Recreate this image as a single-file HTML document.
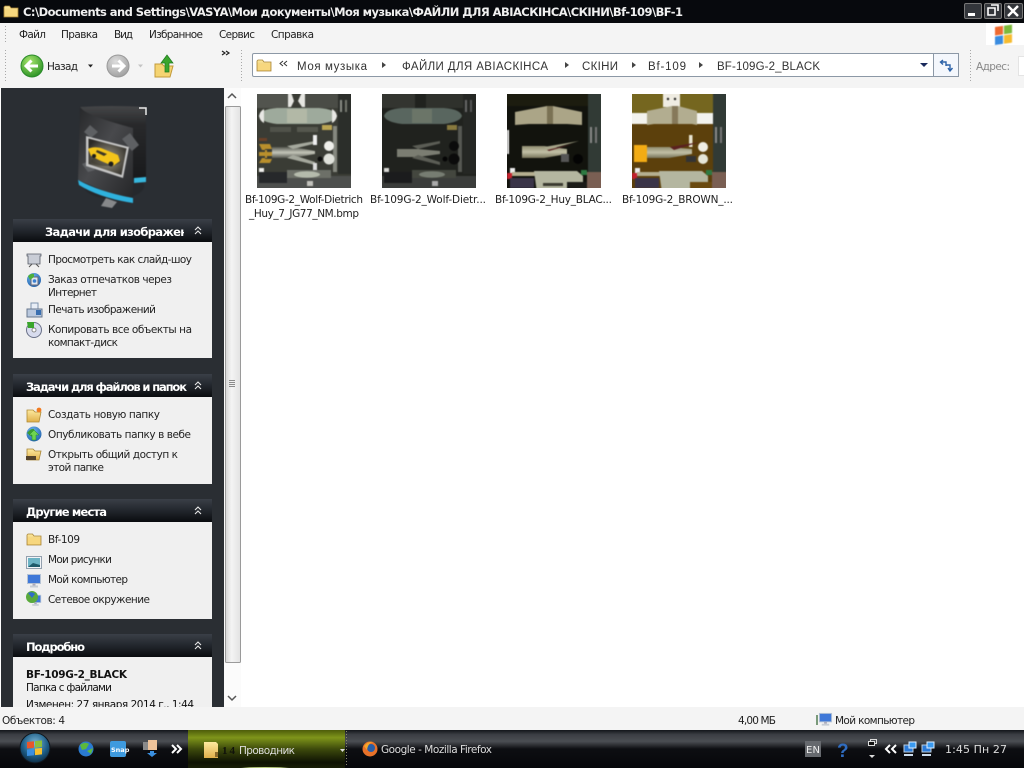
<!DOCTYPE html>
<html lang="ru"><head><meta charset="utf-8"><title>BF-1</title>
<style>
html,body{margin:0;padding:0;background:#fff;width:1024px;height:768px;overflow:hidden}
svg{display:block;position:absolute;left:0;top:0}
text{font-family:"DejaVu Sans","Liberation Sans",sans-serif;font-size:10.5px;fill:#222;white-space:pre}
.b{font-weight:bold}
.h{font-weight:bold;fill:#fff;font-size:11.5px}
.l{font-family:"Liberation Sans",sans-serif;font-size:11.5px}
.w{fill:#ddd}
</style></head><body>
<svg width="1024" height="768" viewBox="0 0 1024 768" xmlns="http://www.w3.org/2000/svg">
<defs>
<linearGradient id="hd" x1="0" y1="0" x2="0" y2="1"><stop offset="0" stop-color="#3a3f47"/><stop offset=".55" stop-color="#20242a"/><stop offset="1" stop-color="#090b0e"/></linearGradient>
<linearGradient id="tb" x1="0" y1="0" x2="0" y2="1"><stop offset="0" stop-color="#12151a"/><stop offset=".12" stop-color="#3b3e44"/><stop offset=".3" stop-color="#4b4e53"/><stop offset=".5" stop-color="#0d0e12"/><stop offset="1" stop-color="#06070a"/></linearGradient>
<linearGradient id="act" x1="0" y1="0" x2="0" y2="1"><stop offset="0" stop-color="#4d5c0a"/><stop offset=".2" stop-color="#7f951a"/><stop offset=".5" stop-color="#3d4a0c"/><stop offset=".85" stop-color="#0e1203"/><stop offset="1" stop-color="#181e06"/></linearGradient>
<linearGradient id="sb" x1="0" y1="0" x2="1" y2="0"><stop offset="0" stop-color="#d4d4d4"/><stop offset=".4" stop-color="#f4f4f4"/><stop offset="1" stop-color="#e2e2e2"/></linearGradient>
<linearGradient id="fold" x1="0" y1="0" x2="0" y2="1"><stop offset="0" stop-color="#fdeaa0"/><stop offset="1" stop-color="#e0b04a"/></linearGradient>
<linearGradient id="dk" x1="0" y1="0" x2="1" y2="1"><stop offset="0" stop-color="#262729"/><stop offset=".45" stop-color="#48494c"/><stop offset="1" stop-color="#242527"/></linearGradient>
<linearGradient id="bk" x1="0" y1="0" x2="0" y2="1"><stop offset="0" stop-color="#454648"/><stop offset=".25" stop-color="#28292b"/><stop offset="1" stop-color="#18191b"/></linearGradient>
<radialGradient id="ph" cx=".5" cy=".55" r=".6"><stop offset="0" stop-color="#a09a88"/><stop offset="1" stop-color="#2c2a26"/></radialGradient>
<radialGradient id="grn" cx=".4" cy=".3" r=".8"><stop offset="0" stop-color="#a8e66c"/><stop offset="1" stop-color="#1f8a1f"/></radialGradient>
<radialGradient id="gry" cx=".4" cy=".3" r=".8"><stop offset="0" stop-color="#ddd"/><stop offset="1" stop-color="#9a9a9a"/></radialGradient>
<radialGradient id="orb" cx=".5" cy=".35" r=".7"><stop offset="0" stop-color="#7cb8d8"/><stop offset=".6" stop-color="#1d5d86"/><stop offset="1" stop-color="#0a2236"/></radialGradient>
<radialGradient id="glob" cx=".4" cy=".3" r=".8"><stop offset="0" stop-color="#6fb6f0"/><stop offset="1" stop-color="#1c5ca8"/></radialGradient>
<linearGradient id="bd" x1="0" y1="0" x2="0" y2="1"><stop offset="0" stop-color="#55574f"/><stop offset=".5" stop-color="#c4c6ba"/><stop offset="1" stop-color="#55574f"/></linearGradient>
<linearGradient id="bd3" x1="0" y1="0" x2="0" y2="1"><stop offset="0" stop-color="#8f8c70"/><stop offset=".5" stop-color="#c2c0a6"/><stop offset="1" stop-color="#77745a"/></linearGradient>
<filter id="bl" x="-.1" y="-.1" width="1.2" height="1.2" color-interpolation-filters="sRGB"><feGaussianBlur stdDeviation=".55"/></filter>
<filter id="bl2" x="-.1" y="-.1" width="1.2" height="1.2" color-interpolation-filters="sRGB"><feGaussianBlur stdDeviation=".5"/></filter>
<clipPath id="cth"><rect width="94" height="94"/></clipPath>
<clipPath id="c1"><rect x="13" y="219" width="171" height="24"/></clipPath>
<clipPath id="c4"><rect x="13" y="657" width="199" height="50"/></clipPath>
<symbol id="fd" viewBox="0 0 16 16"><path d="M1 4 L1 14 L15 14 L15 5 L8 5 L6.500 3 L2 3Z" fill="url(#fold)" stroke="#a88436" stroke-width=".8"/><path d="M1.500 7H14.500V13.500H1.500Z" fill="#f7d77e"/></symbol>
<symbol id="mon" viewBox="0 0 16 16"><rect x="1.500" y="1.500" width="13" height="9" fill="#3f78d8" stroke="#b5c3d5"/><rect x="6.500" y="10.500" width="3" height="2" fill="#aab"/><rect x="4" y="12.500" width="8" height="2" fill="#c6ccd4"/></symbol>
</defs>

<!-- window background -->
<rect width="1024" height="768" fill="#fff"/>
<rect y="0" width="1024" height="23" fill="#07090d"/>
<rect y="23" width="1024" height="65" fill="#f4f4f4"/>

<!-- title bar -->
<use href="#fd" x="3" y="3" width="16" height="16"/>
<text class="b" x="23" y="16" textLength="660" style="fill:#f0f0f0;font-size:11.500px">C:\Documents and Settings\VASYA\Мои документы\Моя музыка\ФАЙЛИ ДЛЯ АВІАСКІНСА\СКІНИ\Bf-109\BF-1</text>
<g stroke="#777" fill="#33363b"><rect x="964.500" y="3.500" width="17" height="15" rx="1.500"/><rect x="984.500" y="3.500" width="17" height="15" rx="1.500"/><rect x="1004.500" y="3.500" width="18" height="15" rx="1.500"/></g>
<rect x="968" y="13" width="7" height="3" fill="#fff"/>
<path d="M988 8h7v7h-7zM991 5h7v6" fill="none" stroke="#fff" stroke-width="1.600"/>
<path d="M1008 6l10 10M1018 6l-10 10" stroke="#fff" stroke-width="2.400"/>

<!-- menu -->
<path d="M5.500 26V42M5.500 50V82M241.500 50V82M970.500 50V82" stroke="#a8a8a8" stroke-dasharray="1 2"/>
<text x="19" y="38" textLength="27">Файл</text>
<text x="61" y="38" textLength="37">Правка</text>
<text x="114" y="38" textLength="19">Вид</text>
<text x="149" y="38" textLength="54">Избранное</text>
<text x="219" y="38" textLength="36">Сервис</text>
<text x="271" y="38" textLength="43">Справка</text>
<rect x="986" y="23" width="38" height="22" fill="#fff"/>
<g transform="translate(995,25) skewY(-8)" filter="url(#bl2)"><rect width="8" height="8.500" y="2" fill="#ee6a30"/><rect x="9" y="2" width="8" height="8.500" fill="#7cba3a"/><rect y="11.500" width="8" height="8.500" fill="#3a8ce0"/><rect x="9" y="11.500" width="8" height="8.500" fill="#f6bb2e"/></g>

<!-- toolbar -->
<circle cx="32" cy="66" r="11" fill="url(#grn)" stroke="#2a8a2a"/>
<path d="M38 66H27M31.500 60.500L26 66L31.500 71.500" fill="none" stroke="#fff" stroke-width="3"/>
<text x="47" y="70" textLength="31">Назад</text>
<path d="M88 64.500h5l-2.500 3z" fill="#222"/>
<circle cx="118" cy="66" r="11" fill="url(#gry)" stroke="#999"/>
<path d="M112 66H123M118.500 60.500L124 66L118.500 71.500" fill="none" stroke="#fff" stroke-width="3"/>
<path d="M138 64.500h5l-2.500 3z" fill="#c4c4c4"/>
<path d="M155 64h7l2 2h9l-3 11h-15z" fill="#f5d472" stroke="#c29a3a"/>
<path d="M165 72V63H161L167 55L173 63H169V72Z" fill="#3aa52c" stroke="#1e7a1e" stroke-width=".7"/>
<path d="M222 51l3 2-3 2M226 51l3 2-3 2" fill="none" stroke="#222" stroke-width="1.200"/>

<!-- address bar -->
<rect x="252.500" y="53.500" width="706" height="23" rx="1.500" fill="#fff" stroke="#8c98a6"/>
<rect x="933.500" y="53.500" width="25" height="23" fill="#f4f7fc" stroke="#8c98a6"/>
<use href="#fd" x="256" y="57" width="16" height="16"/>
<path d="M283 61l-3 2.500 3 2.500M287 61l-3 2.500 3 2.500" fill="none" stroke="#333"/>
<text class="l" x="297" y="70" textLength="70" style="fill:#333">Моя музыка</text>
<path d="M382 62l4 3-4 3z" fill="#444"/>
<text class="l" x="402" y="70" textLength="146" style="fill:#333">ФАЙЛИ ДЛЯ АВІАСКІНСА</text>
<path d="M565 62l4 3-4 3z" fill="#444"/>
<text class="l" x="582" y="70" textLength="36" style="fill:#333">СКІНИ</text>
<path d="M632 62l4 3-4 3z" fill="#444"/>
<text class="l" x="648" y="70" textLength="38" style="fill:#333">Bf-109</text>
<path d="M699 62l4 3-4 3z" fill="#444"/>
<text class="l" x="717" y="70" textLength="103" style="fill:#333">BF-109G-2_BLACK</text>
<path d="M920 63h8l-4 4z" fill="#1a2a5c"/>
<path d="M946 66V62H941M943 60L940.500 62L943 64.500" fill="none" stroke="#2c62a8" stroke-width="1.400"/>
<path d="M946 65H950V70M948 68L950 71L952.500 68" fill="none" stroke="#2c62a8" stroke-width="1.400"/>
<text x="976" y="70" textLength="34" style="fill:#888">Адрес:</text>
<rect x="1018.500" y="56.500" width="10" height="19" fill="#fff" stroke="#e4e4e4"/>

<!-- left sidebar -->
<rect x="1" y="88" width="223" height="619" fill="#2a2e33"/>

<!-- sidebar folder icon -->
<g filter="url(#bl2)">
<ellipse cx="114" cy="186" rx="30" ry="13" fill="#25282c"/>
<path d="M80 107 Q110 105 146 107 V178 L134 180 L120 150Z" fill="url(#bk)"/>
<path d="M134 178L146 177V182L134 183Z" fill="#37b7dd"/>
<path d="M80 107 Q84 115 133 128 V203 L78 180Z" fill="url(#dk)"/>
<path d="M78 180 Q100 192 133 198 V203 Q100 198 79 185Z" fill="#2fb2de"/>
<path d="M106 198l11 4-5 6-11-2z" fill="#86888a"/>
<path d="M84 132l6-7 8 7-7 6zM122 139l8-6 9 12-7 6zM82 164l6 8 7-2-8-8z" fill="#5e6063"/>
<path d="M86 136L129 147L123 178L86 166Z" fill="#c4c4c4"/>
<path d="M88.500 138.500L126.500 148.500L121.500 175L88.500 164Z" fill="url(#ph)"/>
<ellipse cx="106" cy="161" rx="15" ry="5" fill="#3a362c" opacity=".55"/>
<path d="M88 149Q93 146 101 148L118 155L120 161L113 166L101 161L91 156Z" fill="#f4c41a"/>
<path d="M97 150l10 4-3 2-8-4z" fill="#3a3526"/>
<circle cx="111" cy="164" r="2.500" fill="#1c1c1c"/><circle cx="94" cy="156" r="2" fill="#1c1c1c"/>
</g>
<path d="M139 108h7v7" fill="none" stroke="#e8e8e8" stroke-width="1.500"/>

<!-- panels -->
<g>
<rect x="13" y="242" width="199" height="116" fill="#f0f0f0"/><rect x="13" y="219" width="199" height="23" fill="url(#hd)"/>
<rect x="13" y="397" width="199" height="87" fill="#f0f0f0"/><rect x="13" y="374" width="199" height="23" fill="url(#hd)"/>
<rect x="13" y="522" width="199" height="97" fill="#f0f0f0"/><rect x="13" y="499" width="199" height="23" fill="url(#hd)"/>
<rect x="13" y="657" width="199" height="50" fill="#f0f0f0"/><rect x="13" y="634" width="199" height="23" fill="url(#hd)"/>
</g>
<g fill="none" stroke="#e8e8e8" stroke-width="1.100">
<path d="M195 230l3-3 3 3M195 234l3-3 3 3"/>
<path d="M195 385l3-3 3 3M195 389l3-3 3 3"/>
<path d="M195 510l3-3 3 3M195 514l3-3 3 3"/>
<path d="M195 645l3-3 3 3M195 649l3-3 3 3"/>
</g>
<text class="h" x="45" y="236" textLength="158" clip-path="url(#c1)">Задачи для изображений</text>
<text class="h" x="26" y="391" textLength="161">Задачи для файлов и папок</text>
<text class="h" x="26" y="516" textLength="81">Другие места</text>
<text class="h" x="26" y="651" textLength="59">Подробно</text>

<text x="48" y="263" textLength="144">Просмотреть как слайд-шоу</text>
<text x="48" y="283" textLength="124">Заказ отпечатков через</text>
<text x="48" y="296" textLength="49">Интернет</text>
<text x="48" y="313" textLength="108">Печать изображений</text>
<text x="48" y="333" textLength="144">Копировать все объекты на</text>
<text x="48" y="346" textLength="70">компакт-диск</text>

<text x="48" y="418" textLength="112">Создать новую папку</text>
<text x="48" y="438" textLength="143">Опубликовать папку в вебе</text>
<text x="48" y="458" textLength="130">Открыть общий доступ к</text>
<text x="48" y="471" textLength="56">этой папке</text>

<text x="48" y="543" textLength="32">Bf-109</text>
<text x="48" y="563" textLength="64">Мои рисунки</text>
<text x="48" y="583" textLength="80">Мой компьютер</text>
<text x="48" y="603" textLength="102">Сетевое окружение</text>

<g clip-path="url(#c4)">
<text class="b" x="26" y="678" textLength="101" style="fill:#111">BF-109G-2_BLACK</text>
<text x="26" y="691" textLength="86" style="fill:#111">Папка с файлами</text>
<text x="26" y="708" textLength="168" style="fill:#111">Изменен: 27 января 2014 г., 1:44</text>
</g>

<!-- sidebar icons panel 1 -->
<path d="M27 254h14v2h-1v8h-12v-8h-1z" fill="#c9cdd6" stroke="#555b66" stroke-width=".8"/><path d="M32 264l-3 3M36 264l3 3" stroke="#555"/>
<circle cx="34" cy="280" r="7" fill="url(#glob)"/><rect x="31" y="277" width="7" height="8" fill="#dfe6f0" stroke="#667"/><circle cx="34.500" cy="281" r="1.800" fill="#3a7fd0"/><path d="M28 276q3-3 6-2v3l-4 3z" fill="#4caf3c"/>
<rect x="31" y="303" width="7" height="9" fill="#e8eef6" stroke="#7e93ad"/><rect x="27" y="309" width="15" height="8" fill="#b9c8de" stroke="#68778e"/><rect x="36" y="310" width="5" height="5" fill="#3a6fb0"/>
<circle cx="34" cy="330" r="7.500" fill="#d8dcee" stroke="#6a7188"/><circle cx="34" cy="330" r="2" fill="#fff" stroke="#888"/><path d="M27 322h7v6h-6z" fill="#3aa52c"/>
<!-- panel 2 -->
<path d="M27 410h6l2 2h6l-2 10H27z" fill="url(#fold)" stroke="#b08a34" stroke-width=".8"/><circle cx="39" cy="410" r="2.400" fill="#f17a1f"/>
<circle cx="34" cy="434" r="7.500" fill="url(#glob)"/><path d="M27 433q4-5 7-4l1 5-3 3z" fill="#3c9c35"/><path d="M34 430l5 5h-3v5h-4v-5h-3z" fill="#6ed451" stroke="#238a23" stroke-width=".5"/>
<path d="M27 449h6l2 2h6l-2 9H27z" fill="url(#fold)" stroke="#a88436" stroke-width=".8"/><rect x="26" y="456" width="10" height="4" fill="#54432c"/>
<!-- panel 3 -->
<use href="#fd" x="26" y="531" width="16" height="16"/>
<rect x="26.500" y="556.500" width="15" height="12" fill="#f2f4f7" stroke="#93a0ae"/><rect x="28" y="558" width="12" height="9" fill="#6cb3c4"/><path d="M28 567l5-4 7 2v2z" fill="#1e5a6a"/>
<use href="#mon" x="26" y="573" width="16" height="16"/>
<use href="#mon" x="29" y="594" width="13" height="13"/><circle cx="32" cy="597" r="6" fill="#5aaa3c"/><path d="M28 593q4-2 7 1l-3 4z" fill="#2e6cc8"/>

<!-- scrollbar -->
<rect x="224" y="88" width="17" height="619" fill="#fbfbfb"/>
<path d="M228 98l4-4 4 4" fill="none" stroke="#555" stroke-width="1.500"/>
<path d="M228 696l4 4 4-4" fill="none" stroke="#555" stroke-width="1.500"/>
<rect x="225.500" y="106.500" width="15" height="556" rx="1" fill="url(#sb)" stroke="#9a9a9a"/>
<path d="M229 380.500h6M229 382.500h6M229 384.500h6M229 386.500h6" stroke="#8a8a8a"/>

<!-- thumbnails -->
<g transform="translate(257,94)" clip-path="url(#cth)">
<g filter="url(#bl)">
<rect x="-5" y="-5" width="104" height="104" fill="#3a3c35"/>
<rect x="-5" y="-5" width="38" height="19" fill="#52544e"/><rect x="44" y="-5" width="38" height="19" fill="#4a4c46"/>
<path d="M31 -2h3l3 9-3 6h-3zM48 -2h-3l-4 9 4 6h3z" fill="#e6e6e2"/>
<path d="M2 22Q4 15 20 14H62Q78 15 80 22Q78 28 62 30H20Q4 28 2 22Z" fill="#9eaa9c"/>
<path d="M2 22q1-5 5-7v14q-4-2-5-7zM80 22q-1-5-5-7v14q4-2 5-7z" fill="#e8e8e4"/>
<rect x="30" y="15" width="20" height="14" fill="#b2b8a6"/>
<rect x="81" y="-5" width="18" height="85" fill="#2b2e2a"/>
<rect x="83" y="6" width="2" height="12" fill="#8a8d86"/><rect x="88" y="6" width="2" height="12" fill="#74776f"/>
<rect x="76" y="32" width="4" height="46" fill="#85887f"/>
<rect x="65" y="31" width="10" height="5" fill="#bba552"/>
<rect x="13" y="33" width="21" height="5" fill="#50524a"/><rect x="40" y="33" width="21" height="5" fill="#55574e"/>
<rect x="2" y="44" width="8" height="3" fill="#6a4028"/>
<path d="M2 50h11l2 5H8v3h7v4H8v3h7l-2 4H2l3-5h5v-2H2v-4h8v-2H5z" fill="#b98f2c"/>
<path d="M15 53H36L58 57V60L36 64H15Z" fill="url(#bd)"/>
<path d="M30 52L58 47V49.500L36 55zM30 64L58 71V68L36 61z" fill="#a5a89d"/>
<rect x="56" y="41" width="4" height="10" fill="#eee"/><rect x="56" y="69" width="4" height="8" fill="#ddd"/>
<circle cx="72" cy="52" r="5" fill="#efefeb"/><circle cx="72" cy="65" r="5.500" fill="#dfe1da"/><circle cx="63" cy="65" r="2.500" fill="#0c0c0c"/>
<rect x="2" y="74" width="5" height="5" fill="#f0f0ec"/>
<rect x="-5" y="82" width="104" height="17" fill="#4d4f4d"/><rect x="2" y="78" width="28" height="11" fill="#26282a"/>
<rect x="30" y="76" width="44" height="8" fill="#6d7068"/><ellipse cx="50" cy="80.500" rx="13" ry="3.200" fill="#b5bbac"/>
<rect x="50" y="87" width="6" height="5" fill="#c2c2bc"/>
</g></g>
<g transform="translate(382,94)" clip-path="url(#cth)">
<g filter="url(#bl)">
<rect x="-5" y="-5" width="104" height="104" fill="#20221e"/>
<rect x="-5" y="-5" width="38" height="19" fill="#333530"/><rect x="44" y="-5" width="38" height="19" fill="#2f312c"/>
<path d="M2 22Q4 15 20 14H62Q78 15 80 22Q78 28 62 30H20Q4 28 2 22Z" fill="#59665f"/>
<rect x="30" y="15" width="20" height="14" fill="#6b7568"/>
<rect x="81" y="-5" width="18" height="85" fill="#252724"/>
<rect x="83" y="6" width="2" height="12" fill="#666"/><rect x="88" y="6" width="2" height="12" fill="#555"/>
<rect x="76" y="32" width="4" height="46" fill="#565852"/>
<rect x="65" y="31" width="10" height="5" fill="#88793e"/>
<path d="M15 55H36L58 57V60L36 63H15Z" fill="#7b7d72"/>
<path d="M30 52L58 47V49.500L36 55zM30 64L58 71V68L36 61z" fill="#5b5d55"/>
<circle cx="72" cy="52" r="5" fill="#0b0b0b"/><circle cx="72" cy="65" r="5.500" fill="#0b0b0b"/><circle cx="63" cy="65" r="2.500" fill="#050505"/>
<rect x="2" y="74" width="5" height="5" fill="#d8d8d4"/>
<rect x="-5" y="82" width="104" height="17" fill="#3b3d3b"/><rect x="2" y="78" width="28" height="11" fill="#1b1c1d"/>
<rect x="30" y="76" width="44" height="8" fill="#44473f"/><ellipse cx="50" cy="80.500" rx="13" ry="3.200" fill="#777d72"/>
<rect x="50" y="87" width="6" height="5" fill="#aaa"/>
</g></g>
<g transform="translate(507,94)" clip-path="url(#cth)">
<g filter="url(#bl)">
<rect x="-5" y="-5" width="104" height="104" fill="#12130d"/>
<rect x="-5" y="-5" width="86" height="17" fill="#1c1c0f"/>
<path d="M8 31V18L40 12H46L75 18V31L60 30H22Z" fill="#aba587"/><path d="M40 12h6v18h-6z" fill="#7a7254"/>
<rect x="81" y="-5" width="18" height="83" fill="#313a35"/>
<rect x="83" y="33" width="2" height="16" fill="#888"/><rect x="88" y="33" width="2" height="16" fill="#777"/>
<path d="M15 52H37L60 55V60L37 64H15Z" fill="url(#bd3)"/>
<path d="M37 53L72 47L40 56z" fill="#a8a68a"/><path d="M40 56L66 50L42 57z" fill="#5a2020"/>
<rect x="0" y="36" width="2" height="24" fill="#eee"/>
<circle cx="71" cy="65" r="5" fill="#040404"/><rect x="54" y="60" width="8" height="8" fill="#555"/>
<rect x="3" y="74" width="5" height="5" fill="#eee"/><rect x="0" y="79" width="5" height="6" fill="#c4202c"/>
<rect x="5" y="78" width="23" height="4" fill="#b5af90"/><rect x="3" y="84" width="24" height="10" fill="#3a3448"/>
<path d="M27 77H70L76 82V99H30Z" fill="#b4b6a0"/><rect x="60" y="88" width="20" height="11" fill="#1b1b18"/>
<rect x="36" y="89" width="20" height="3" fill="#3a3a30"/>
<rect x="80" y="78" width="19" height="21" fill="#7a5f53"/><rect x="74" y="76" width="6" height="5" fill="#2d7a42"/>
</g></g>
<g transform="translate(632,94)" clip-path="url(#cth)">
<g filter="url(#bl)">
<rect x="-5" y="-5" width="104" height="104" fill="#5c400c"/>
<rect x="-5" y="-5" width="86" height="24" fill="#75661f"/>
<rect x="31" y="-5" width="17" height="18" fill="#efece2"/>
<circle cx="36" cy="5" r="1.200" fill="#222"/><circle cx="43" cy="5" r="1.200" fill="#222"/>
<path d="M-5 19H18V30H-5Z" fill="#f3f3ee"/><path d="M63 19H81V30H63Z" fill="#f3f3ee"/>
<path d="M15 31V17L40 12H46L65 17V31L60 30H22Z" fill="#b2ad90"/><path d="M40 12h6v18h-6z" fill="#86795a"/>
<rect x="81" y="-5" width="18" height="83" fill="#313a35"/>
<rect x="83" y="33" width="2" height="16" fill="#888"/><rect x="88" y="33" width="2" height="16" fill="#777"/>
<rect x="57" y="41" width="3.500" height="12" fill="#e8e4d2"/>
<rect x="2" y="51" width="13" height="17" fill="#f3ac14"/>
<path d="M15 53H37L60 55V60L37 64H15Z" fill="url(#bd3)"/>
<path d="M38 53L68 48L42 56z" fill="#5a2020"/>
<circle cx="71" cy="53" r="5" fill="#f0eee4"/><circle cx="71" cy="65" r="5" fill="#e6e6d8"/>
<rect x="54" y="62" width="10" height="6" fill="#333"/>
<rect x="3" y="74" width="5" height="5" fill="#eee"/><rect x="0" y="79" width="5" height="6" fill="#c4202c"/>
<rect x="5" y="78" width="23" height="4" fill="#b5af90"/><rect x="3" y="84" width="24" height="10" fill="#3a3448"/>
<path d="M27 77H70L76 82V99H30Z" fill="#b4b6a0"/><rect x="58" y="88" width="22" height="11" fill="#6a4a10"/>
<rect x="80" y="78" width="19" height="21" fill="#7a5f53"/><rect x="74" y="76" width="6" height="5" fill="#2d7a42"/>
</g></g>

<text x="245" y="203" textLength="118">Bf-109G-2_Wolf-Dietrich</text>
<text x="249" y="217" textLength="110">_Huy_7_JG77_NM.bmp</text>
<text x="370" y="203" textLength="116">Bf-109G-2_Wolf-Dietr...</text>
<text x="495" y="203" textLength="117">Bf-109G-2_Huy_BLAC...</text>
<text x="622" y="203" textLength="111">Bf-109G-2_BROWN_...</text>

<!-- status bar -->
<rect y="707" width="1024" height="23" fill="#f4f4f4"/>
<text x="2" y="724" textLength="63">Объектов: 4</text>
<text x="738" y="724" textLength="38">4,00 МБ</text>
<use href="#mon" x="818" y="712" width="15" height="15"/>
<rect x="816" y="715" width="2" height="10" fill="#7a9a7a"/>
<text x="835" y="724" textLength="80">Мой компьютер</text>

<!-- taskbar -->
<rect y="730" width="1024" height="38" fill="url(#tb)"/>
<circle cx="35" cy="748" r="15" fill="url(#orb)" stroke="#10161c"/>
<g transform="translate(27,741) skewY(-6)"><rect y="1" width="7" height="6.500" fill="#e8562a"/><rect x="8" y="1" width="7" height="6.500" fill="#8bc03c"/><rect y="8.500" width="7" height="6.500" fill="#3b90e0"/><rect x="8" y="8.500" width="7" height="6.500" fill="#f7c12e"/></g>
<circle cx="86" cy="749" r="7.500" fill="#2a7ad0"/><path d="M80 745q5-4 9-1l-3 5-4 1zM87 751l6-3-2 6z" fill="#5cb83c"/>
<rect x="110" y="741" width="16" height="16" rx="2" fill="#3e9ade"/><text x="111" y="752" style="font-size:6.500px;fill:#fff;font-weight:bold">Snap</text>
<rect x="143" y="742" width="8" height="8" fill="#8a8a8a"/><rect x="148" y="740" width="9" height="10" fill="#eec39a"/><path d="M150 751h4v2h3l-5 4-5-4h3z" fill="#3a8fe0"/>
<path d="M172 745l4 4-4 4M177 745l4 4-4 4" fill="none" stroke="#fff" stroke-width="2"/>

<rect x="188" y="730" width="157" height="38" fill="url(#act)"/>
<ellipse cx="265" cy="769" rx="28" ry="2" fill="#b9cc80"/>
<path d="M204 742h12l2 2v14h-14z" fill="url(#fold)"/><rect x="215" y="752" width="3" height="5" fill="#8a6a2a"/>
<text x="222" y="754" textLength="13" style="font-family:'Liberation Serif',serif;font-weight:bold;font-size:11px;fill:#10120a">14</text>
<text class="w" x="239" y="754" textLength="56">Проводник</text>
<path d="M340 749h5l-2.500 3z" fill="#ddd"/>
<path d="M346.500 731V767" stroke="#8a8a6a" stroke-dasharray="1 2"/>
<circle cx="370" cy="749" r="7.500" fill="#e8722a"/><circle cx="371" cy="748" r="4" fill="#2a5ea8"/><path d="M364 746q4-5 9-4-5 1-6 8z" fill="#f4a62a"/>
<text class="w" x="381" y="753" textLength="111">Google - Mozilla Firefox</text>

<rect x="805" y="741" width="16" height="16" fill="#66696e"/>
<text x="806" y="753" textLength="14" style="fill:#eee;font-size:10px">EN</text>
<text x="837" y="757" style="font-family:'Liberation Sans',sans-serif;font-size:19px;font-weight:bold;fill:#2f6cc0">?</text>
<rect x="870.500" y="739.500" width="6" height="4" fill="none" stroke="#ddd"/><rect x="868.500" y="741.500" width="6" height="4" fill="#111" stroke="#ddd"/>
<path d="M869 755h6l-3 3z" fill="#ddd"/>
<path d="M890 745l-4 4 4 4M896 745l-4 4 4 4" fill="none" stroke="#fff" stroke-width="2"/>
<rect x="904" y="745" width="9" height="7" fill="#2a7ad8" stroke="#bcd"/><rect x="909" y="742" width="7" height="6" fill="#3a9af0" stroke="#def"/><path d="M904 755h9" stroke="#cde" stroke-width="2"/>
<rect x="922" y="745" width="9" height="7" fill="#2a7ad8" stroke="#bcd"/><rect x="927" y="742" width="7" height="6" fill="#3a9af0" stroke="#def"/><path d="M922 755h9" stroke="#cde" stroke-width="2"/>
<text x="945" y="753" textLength="62" style="fill:#dcdcdc;font-size:11px">1:45 Пн 27</text>
</svg>
</body></html>
